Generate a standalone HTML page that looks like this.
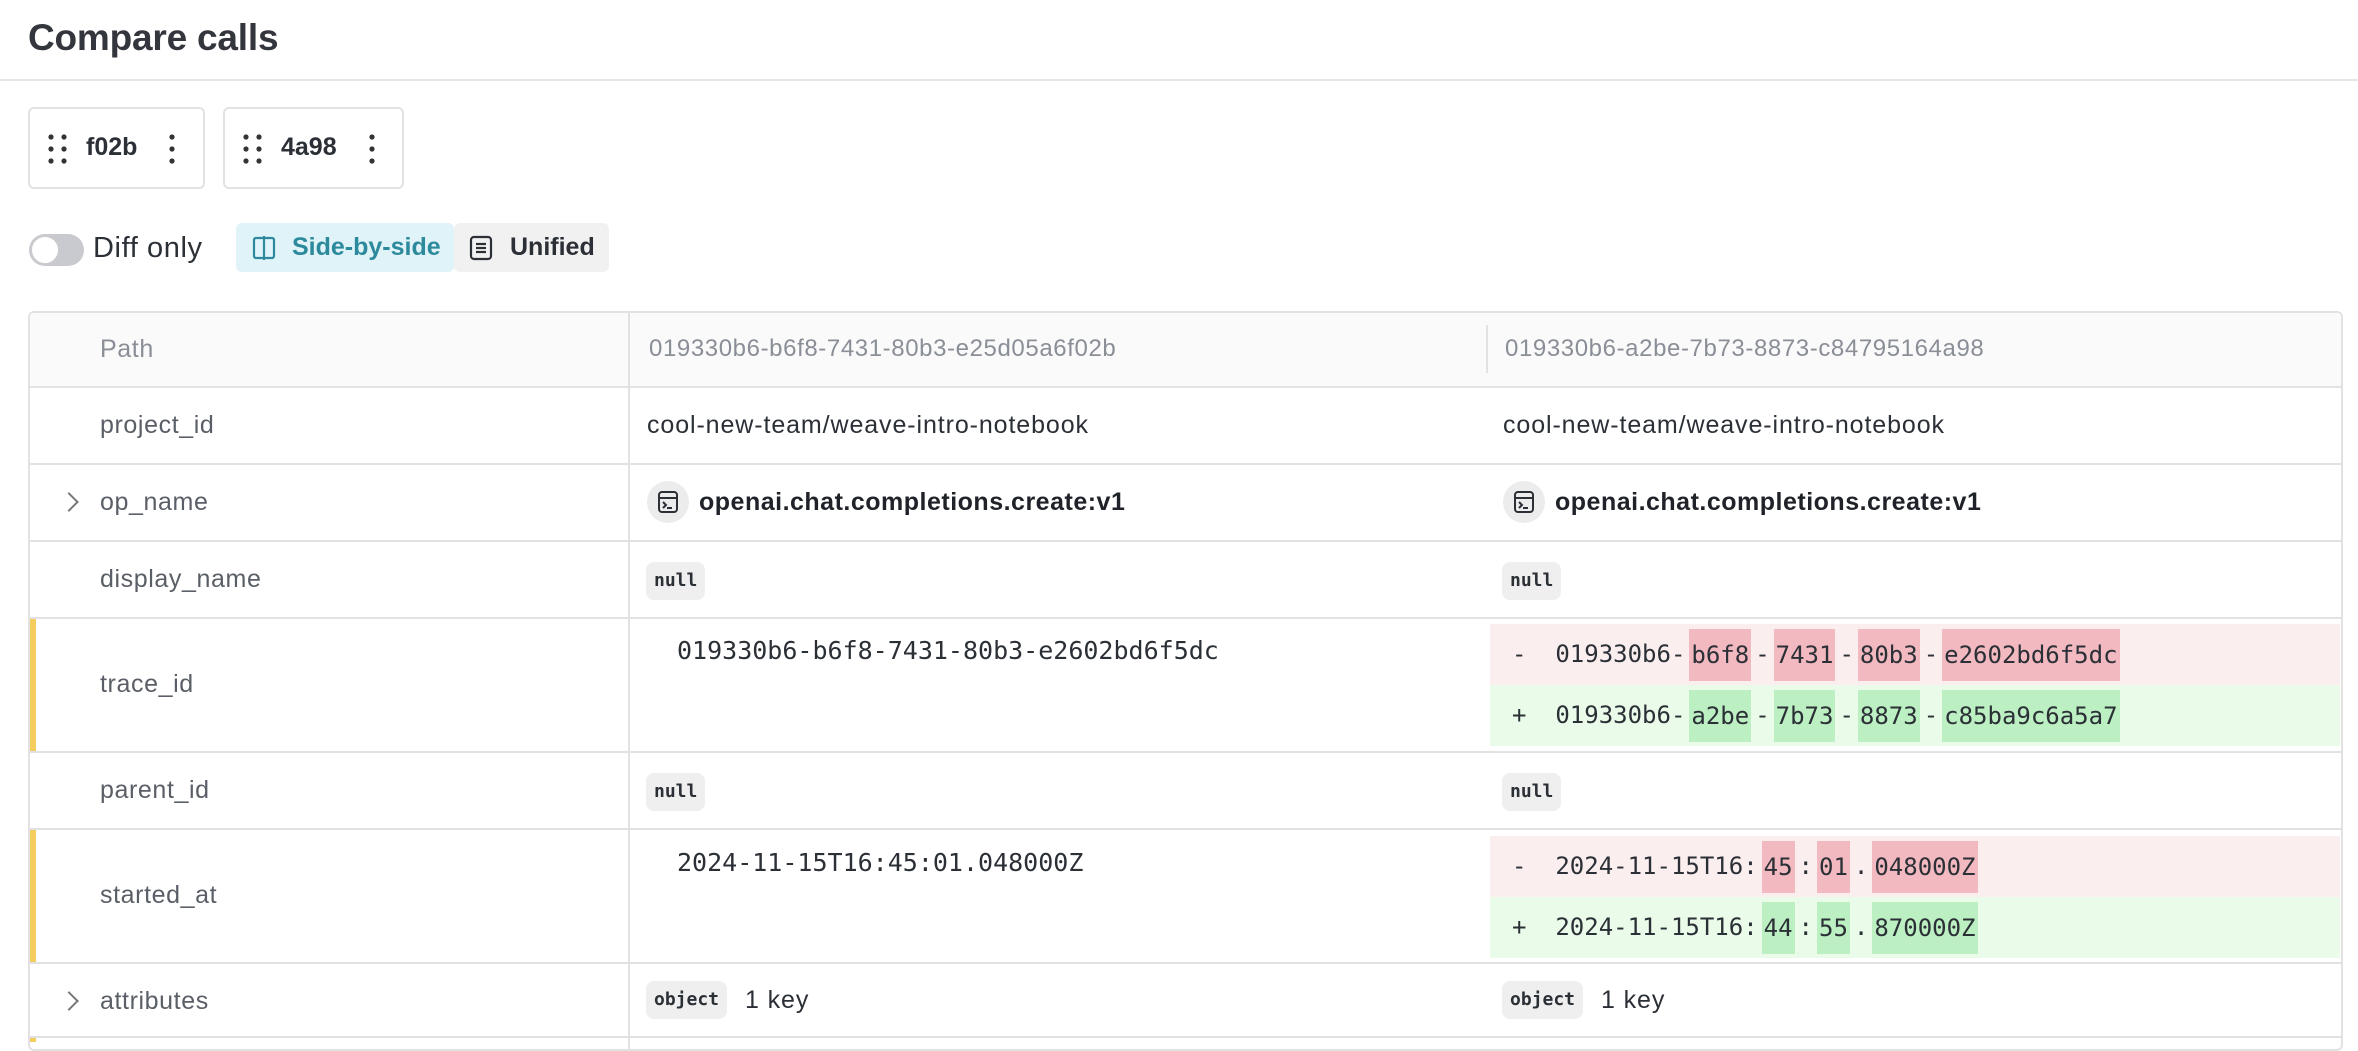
<!DOCTYPE html>
<html><head><meta charset="utf-8">
<style>
*{box-sizing:border-box;margin:0;padding:0}
body{width:2358px;height:1040px;overflow:hidden;background:#fff;font-family:"Liberation Sans",sans-serif;color:#2b2f36;position:relative}
.a{position:absolute}
.title{left:28px;top:17px;font-size:37px;font-weight:bold;color:#33363d;letter-spacing:-0.2px}
.hline{left:0;top:79px;width:2358px;height:2px;background:#e6e6e6}
.chip{top:107px;height:82px;border:2px solid #e2e2e2;border-radius:6px;background:#fff}
.chip .t{position:absolute;top:24px;font-size:25px;font-weight:bold;color:#2b2f36}
.toggle{left:29px;top:234px;width:55px;height:32px;border-radius:16px;background:#c8cacf}
.knob{left:31px;top:236px;width:28px;height:28px;border-radius:14px;background:#fff;border:1px solid #ccc}
.mono{font-family:"DejaVu Sans Mono","Liberation Mono",monospace}
.table{left:28px;top:311px;width:2315px;height:740px;border:2px solid #e2e2e2;border-radius:6px}
.row{position:absolute;left:28px;width:2315px;border-top:2px solid #e2e2e2}
.lbl{position:absolute;left:100px;font-size:25px;letter-spacing:0.6px;color:#5a5e66}
.val{position:absolute;font-size:25px;letter-spacing:0.9px;color:#2b2f36}
.badge{position:absolute;background:#efefef;border-radius:8px;font-size:18px;font-weight:bold;padding:0 8px;height:38px;line-height:38px;color:#2b2f36}
.vline{position:absolute;top:311px;width:2px;height:740px;background:#e2e2e2;left:628px}
.bar{position:absolute;left:30px;width:6px;background:#f4cd5e}
.chev{position:absolute;left:62px;width:14px;height:14px;border-right:2px solid #777;border-top:2px solid #777;transform:rotate(45deg)}
.dr{position:absolute;left:1490px;width:850px;height:61px;font-size:24px;line-height:61px;letter-spacing:0px}
.dr span.h{display:inline-block;padding:0 2px;margin:0 4px;height:52px;line-height:52px;vertical-align:middle}
.minus{background:#fbeeee}.minus .h{background:#f3b9c0}
.plus{background:#eafbea}.plus .h{background:#bcefc2}
.ic{position:absolute;width:42px;height:42px;border-radius:21px;background:#ececec}
.opn{position:absolute;font-size:25px;letter-spacing:0.5px;font-weight:bold;color:#1f2228}
</style></head><body>
<div class="a title">Compare calls</div>
<div class="a hline"></div>

<div class="a chip" style="left:28px;width:177px">
 <svg class="a" style="left:18px;top:25px" width="20" height="30"><g fill="#333"><circle cx="3" cy="3" r="2.6"/><circle cx="16" cy="3" r="2.6"/><circle cx="3" cy="15" r="2.6"/><circle cx="16" cy="15" r="2.6"/><circle cx="3" cy="27" r="2.6"/><circle cx="16" cy="27" r="2.6"/></g></svg>
 <div class="t" style="left:56px">f02b</div>
 <svg class="a" style="left:139px;top:25px" width="6" height="30"><g fill="#333"><circle cx="3" cy="3" r="2.6"/><circle cx="3" cy="15" r="2.6"/><circle cx="3" cy="27" r="2.6"/></g></svg>
</div>
<div class="a chip" style="left:223px;width:181px">
 <svg class="a" style="left:18px;top:25px" width="20" height="30"><g fill="#333"><circle cx="3" cy="3" r="2.6"/><circle cx="16" cy="3" r="2.6"/><circle cx="3" cy="15" r="2.6"/><circle cx="16" cy="15" r="2.6"/><circle cx="3" cy="27" r="2.6"/><circle cx="16" cy="27" r="2.6"/></g></svg>
 <div class="t" style="left:56px">4a98</div>
 <svg class="a" style="left:144px;top:25px" width="6" height="30"><g fill="#333"><circle cx="3" cy="3" r="2.6"/><circle cx="3" cy="15" r="2.6"/><circle cx="3" cy="27" r="2.6"/></g></svg>
</div>

<div class="a toggle"></div><div class="a knob"></div>
<div class="a" style="left:93px;top:232px;font-size:29px;letter-spacing:0.6px;color:#2b2f36">Diff only</div>
<div class="a" style="left:236px;top:223px;width:218px;height:49px;background:#dff3f8;border-radius:6px"></div>
<svg class="a" style="left:252px;top:235px" width="24" height="26" fill="none" stroke="#2c8a9c" stroke-width="2.2"><rect x="2" y="3" width="20" height="20" rx="2"/><line x1="12" y1="1" x2="12" y2="25"/></svg>
<div class="a" style="left:292px;top:233px;font-size:25px;font-weight:bold;color:#2c8a9c">Side-by-side</div>
<div class="a" style="left:454px;top:223px;width:155px;height:49px;background:#f1f1f1;border-radius:6px"></div>
<svg class="a" style="left:469px;top:235px" width="24" height="26" fill="none" stroke="#2b2f36" stroke-width="2.2"><rect x="2" y="2" width="20" height="22" rx="3"/><line x1="7" y1="9" x2="17" y2="9"/><line x1="7" y1="13" x2="17" y2="13"/><line x1="7" y1="17" x2="17" y2="17"/></svg>
<div class="a" style="left:510px;top:233px;font-size:25px;font-weight:bold;color:#2b2f36">Unified</div>

<div class="a table"></div>
<div class="a" style="left:30px;top:313px;width:2311px;height:74px;background:#fafafa;border-radius:6px 6px 0 0"></div>
<div class="vline"></div>
<div class="a" style="left:1486px;top:325px;width:2px;height:48px;background:#e2e2e2"></div>
<div class="lbl" style="top:335px;color:#8a8e96">Path</div>
<div class="val" style="left:649px;top:335px;color:#8a8e96;font-size:24px;letter-spacing:0.6px">019330b6-b6f8-7431-80b3-e25d05a6f02b</div>
<div class="val" style="left:1505px;top:335px;color:#8a8e96;font-size:24px;letter-spacing:0.6px">019330b6-a2be-7b73-8873-c84795164a98</div>

<div class="row" style="top:386px"></div>
<div class="lbl" style="top:411px">project_id</div>
<div class="val" style="left:647px;top:411px">cool-new-team/weave-intro-notebook</div>
<div class="val" style="left:1503px;top:411px">cool-new-team/weave-intro-notebook</div>

<div class="row" style="top:463px"></div>
<div class="chev" style="top:495px"></div>
<div class="lbl" style="top:488px">op_name</div>
<div class="ic" style="left:647px;top:481px"></div>
<svg class="a" style="left:657px;top:490px" width="22" height="24" fill="none" stroke="#2b2f36" stroke-width="2"><rect x="2" y="2" width="18" height="20" rx="3"/><line x1="2" y1="8" x2="20" y2="8"/><path d="M6 12l3 3-3 3M10 18h5"/></svg>
<div class="opn" style="left:699px;top:488px">openai.chat.completions.create:v1</div>
<div class="ic" style="left:1503px;top:481px"></div>
<svg class="a" style="left:1513px;top:490px" width="22" height="24" fill="none" stroke="#2b2f36" stroke-width="2"><rect x="2" y="2" width="18" height="20" rx="3"/><line x1="2" y1="8" x2="20" y2="8"/><path d="M6 12l3 3-3 3M10 18h5"/></svg>
<div class="opn" style="left:1555px;top:488px">openai.chat.completions.create:v1</div>

<div class="row" style="top:540px"></div>
<div class="lbl" style="top:565px">display_name</div>
<div class="badge mono" style="left:646px;top:562px">null</div>
<div class="badge mono" style="left:1502px;top:562px">null</div>

<div class="row" style="top:617px"></div>
<div class="bar" style="top:619px;height:133px"></div>
<div class="lbl" style="top:670px">trace_id</div>
<div class="val mono" style="left:677px;top:636px;letter-spacing:0px">019330b6-b6f8-7431-80b3-e2602bd6f5dc</div>
<div class="dr mono minus" style="top:624px"><span style="margin-left:22px">-&nbsp;&nbsp;019330b6-</span><span class="h">b6f8</span>-<span class="h">7431</span>-<span class="h">80b3</span>-<span class="h">e2602bd6f5dc</span></div>
<div class="dr mono plus" style="top:685px"><span style="margin-left:22px">+&nbsp;&nbsp;019330b6-</span><span class="h">a2be</span>-<span class="h">7b73</span>-<span class="h">8873</span>-<span class="h">c85ba9c6a5a7</span></div>

<div class="row" style="top:751px"></div>
<div class="lbl" style="top:776px">parent_id</div>
<div class="badge mono" style="left:646px;top:773px">null</div>
<div class="badge mono" style="left:1502px;top:773px">null</div>

<div class="row" style="top:828px"></div>
<div class="bar" style="top:830px;height:133px"></div>
<div class="lbl" style="top:881px">started_at</div>
<div class="val mono" style="left:677px;top:848px;letter-spacing:0px">2024-11-15T16:45:01.048000Z</div>
<div class="dr mono minus" style="top:836px"><span style="margin-left:22px">-&nbsp;&nbsp;2024-11-15T16:</span><span class="h">45</span>:<span class="h">01</span>.<span class="h">048000Z</span></div>
<div class="dr mono plus" style="top:897px"><span style="margin-left:22px">+&nbsp;&nbsp;2024-11-15T16:</span><span class="h">44</span>:<span class="h">55</span>.<span class="h">870000Z</span></div>

<div class="row" style="top:962px"></div>
<div class="chev" style="top:994px"></div>
<div class="lbl" style="top:987px">attributes</div>
<div class="badge mono" style="left:646px;top:981px">object</div>
<div class="val" style="left:745px;top:986px">1 key</div>
<div class="badge mono" style="left:1502px;top:981px">object</div>
<div class="val" style="left:1601px;top:986px">1 key</div>

<div class="row" style="top:1036px"></div>
<div class="bar" style="top:1038px;height:4px"></div>
</body></html>
